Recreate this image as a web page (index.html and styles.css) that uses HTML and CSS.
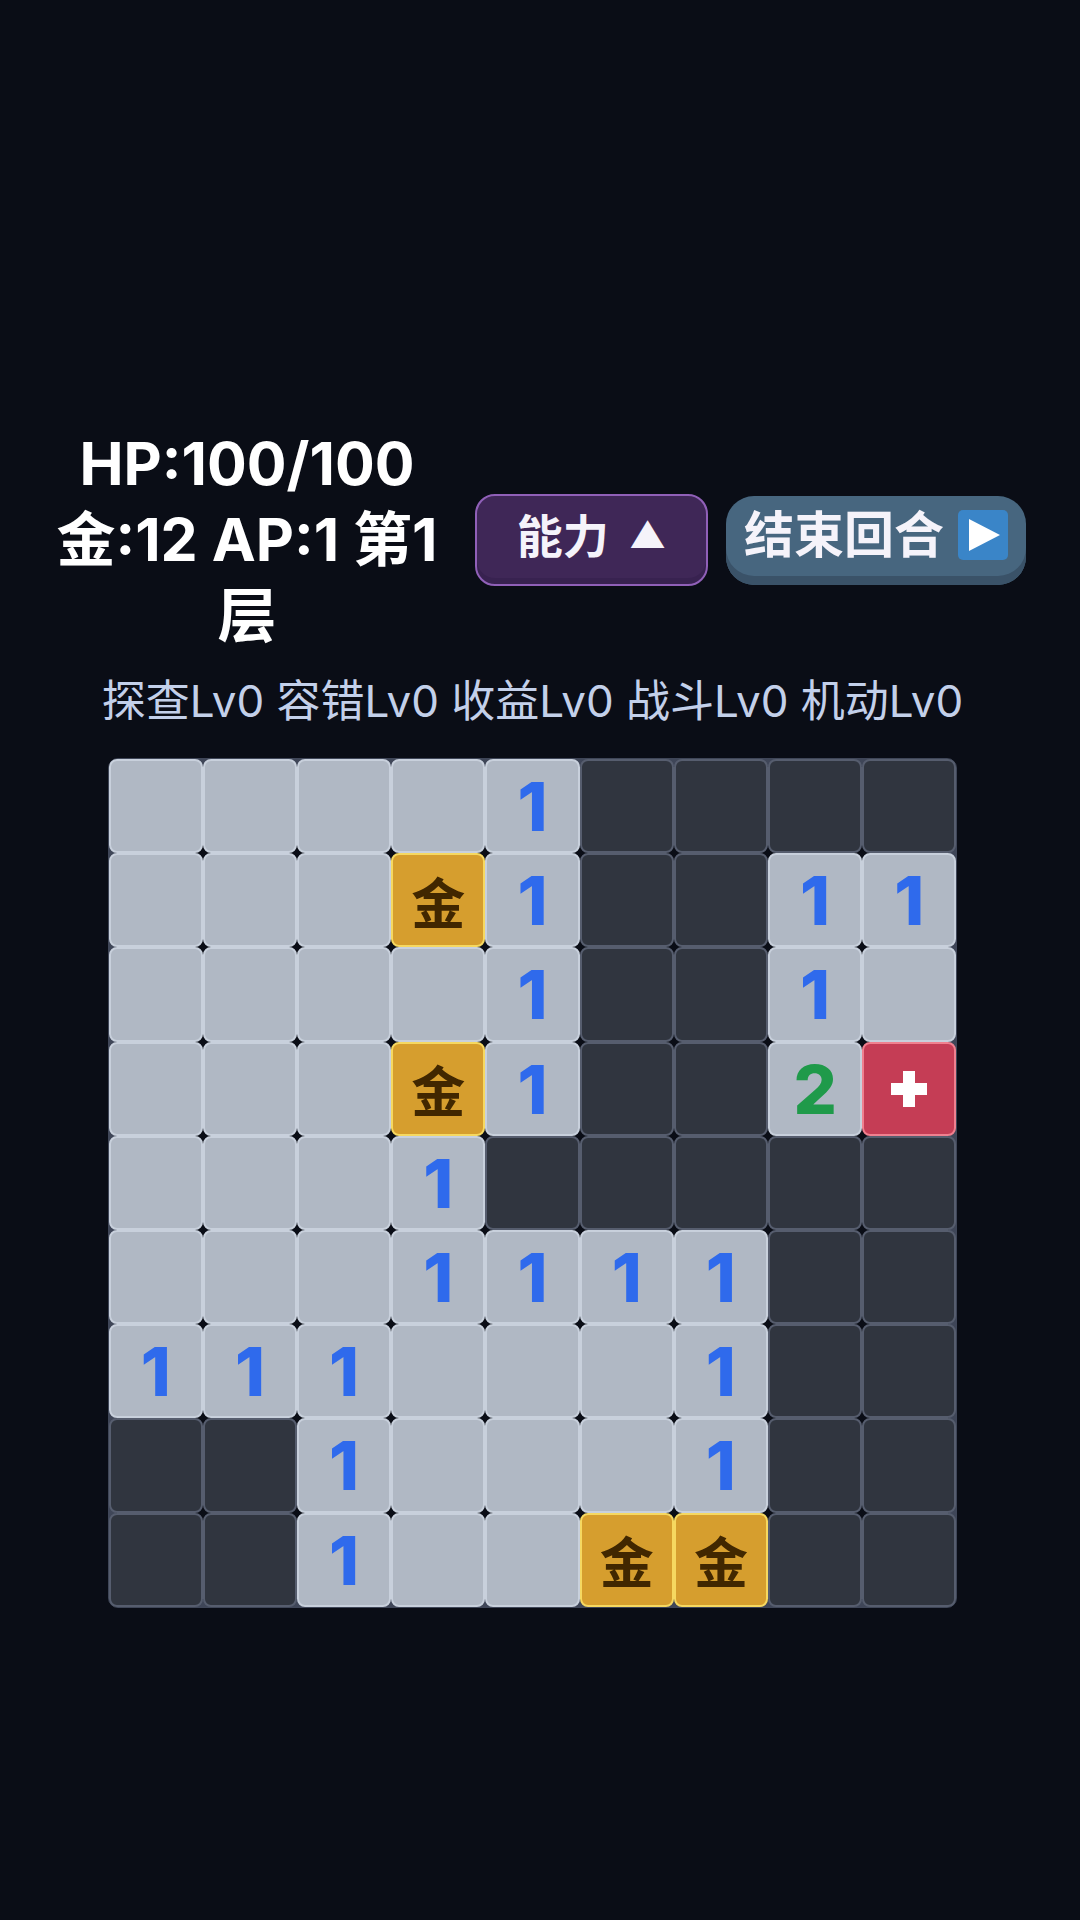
FILE: index.html
```html
<!DOCTYPE html>
<html lang="zh-CN">
<head>
    <meta charset="UTF-8">
    <meta name="viewport" content="width=device-width, initial-scale=1.0">
    <title>扫雷地牢</title>
    <link rel="stylesheet" href="styles.css">
</head>
<body>
    <main class="game">
        <header class="top-bar">
            <div class="stats">HP:100/100<br>金:12 AP:1 第1层</div>
            <button class="btn btn-ability">能力 <span class="caret">▲</span></button>
            <button class="btn btn-end">结束回合
                <svg class="play-icon" viewBox="0 0 50 50"><rect width="50" height="50" rx="5" fill="#3a85c8"/><path d="M11 9 L42 25 L11 41 Z" fill="#fff"/></svg>
            </button>
        </header>
        <p class="skills">探查Lv0 容错Lv0 收益Lv0 战斗Lv0 机动Lv0</p>
        <div class="board">
            <!-- row 1 -->
            <div class="cell open"></div><div class="cell open"></div><div class="cell open"></div><div class="cell open"></div><div class="cell open n1">1</div><div class="cell"></div><div class="cell"></div><div class="cell"></div><div class="cell"></div>
            <!-- row 2 -->
            <div class="cell open"></div><div class="cell open"></div><div class="cell open"></div><div class="cell gold">金</div><div class="cell open n1">1</div><div class="cell"></div><div class="cell"></div><div class="cell open n1">1</div><div class="cell open n1">1</div>
            <!-- row 3 -->
            <div class="cell open"></div><div class="cell open"></div><div class="cell open"></div><div class="cell open"></div><div class="cell open n1">1</div><div class="cell"></div><div class="cell"></div><div class="cell open n1">1</div><div class="cell open"></div>
            <!-- row 4 -->
            <div class="cell open"></div><div class="cell open"></div><div class="cell open"></div><div class="cell gold">金</div><div class="cell open n1">1</div><div class="cell"></div><div class="cell"></div><div class="cell open n2">2</div>
            <div class="cell heal"><svg class="heal-icon" viewBox="0 0 36 36"><path d="M12 0 H24 V12 H36 V24 H24 V36 H12 V24 H0 V12 H12 Z" fill="#fff"/></svg></div>
            <!-- row 5 -->
            <div class="cell open"></div><div class="cell open"></div><div class="cell open"></div><div class="cell open n1">1</div><div class="cell"></div><div class="cell"></div><div class="cell"></div><div class="cell"></div><div class="cell"></div>
            <!-- row 6 -->
            <div class="cell open"></div><div class="cell open"></div><div class="cell open"></div><div class="cell open n1">1</div><div class="cell open n1">1</div><div class="cell open n1">1</div><div class="cell open n1">1</div><div class="cell"></div><div class="cell"></div>
            <!-- row 7 -->
            <div class="cell open n1">1</div><div class="cell open n1">1</div><div class="cell open n1">1</div><div class="cell open"></div><div class="cell open"></div><div class="cell open"></div><div class="cell open n1">1</div><div class="cell"></div><div class="cell"></div>
            <!-- row 8 -->
            <div class="cell"></div><div class="cell"></div><div class="cell open n1">1</div><div class="cell open"></div><div class="cell open"></div><div class="cell open"></div><div class="cell open n1">1</div><div class="cell"></div><div class="cell"></div>
            <!-- row 9 -->
            <div class="cell"></div><div class="cell"></div><div class="cell open n1">1</div><div class="cell open"></div><div class="cell open"></div><div class="cell gold">金</div><div class="cell gold">金</div><div class="cell"></div><div class="cell"></div>
        </div>
    </main>
</body>
</html>
```

FILE: styles.css
```css
* {
    box-sizing: border-box;
}

body {
    margin: 0;
    min-height: 1920px;
    background: #0a0d16;
    color: #fff;
    font-family: Inter, "Noto Sans CJK SC", sans-serif;
}

.game {
    display: flex;
    flex-direction: column;
    align-items: center;
    padding: 426px 15px 0 0;
}

.top-bar {
    display: flex;
    align-items: center;
    align-self: flex-start;
    padding-left: 50px;
}

.stats {
    width: 394px;
    margin-right: 31px;
    font-size: 59px;
    font-weight: 700;
    line-height: 76px;
    text-align: center;
}

.btn {
    display: flex;
    align-items: center;
    justify-content: center;
    font-family: inherit;
    font-size: 46px;
    font-weight: 700;
    color: #f5f3fa;
}

.btn-ability {
    width: 233px;
    height: 92px;
    gap: 20px;
    padding: 0 0 14px;
    background: #3f2757;
    border: 2px solid #9060b8;
    border-radius: 20px;
    box-shadow: inset 0 -6px 0 #382250;
}

.caret {
    font-size: 36px;
    margin-top: 4px;
}

.btn-end {
    width: 300px;
    height: 89px;
    margin-left: 18px;
    gap: 14px;
    padding: 0 0 18px;
    background: #47667f;
    border: none;
    border-radius: 28px;
    box-shadow: inset 0 -9px 0 #3a5268;
    font-size: 50px;
}

.play-icon {
    width: 50px;
    height: 50px;
    flex: none;
    margin-top: 8px;
}

.skills {
    margin: 19px 0 0;
    font-size: 44px;
    line-height: 56px;
    color: #c3d0ea;
    white-space: nowrap;
}

.board {
    display: grid;
    grid-template-columns: repeat(9, 94.2px);
    grid-auto-rows: 94.2px;
    margin-top: 29px;
    border: 1px solid #3f4658;
    border-radius: 10px;
    background: #0a0d16;
    box-shadow: inset 0 0 0 7px #3f4658;
}

.cell {
    display: flex;
    align-items: center;
    justify-content: center;
    background: #30353f;
    border: 2px solid #565d6e;
    border-radius: 8px;
    font-size: 68px;
    font-weight: 800;
}

.open {
    background: #b0b8c4;
    border-color: #c8d0dc;
}

.n1 {
    color: #2f6aec;
}

.n2 {
    color: #1f9a4a;
}

.gold {
    background: #d69e2e;
    border-color: #f6d860;
    color: #412700;
    font-size: 54px;
    font-weight: 700;
}

.heal {
    background: #c53d55;
    border-color: #f0808f;
}

.heal-icon {
    width: 36px;
    height: 36px;
}
```
